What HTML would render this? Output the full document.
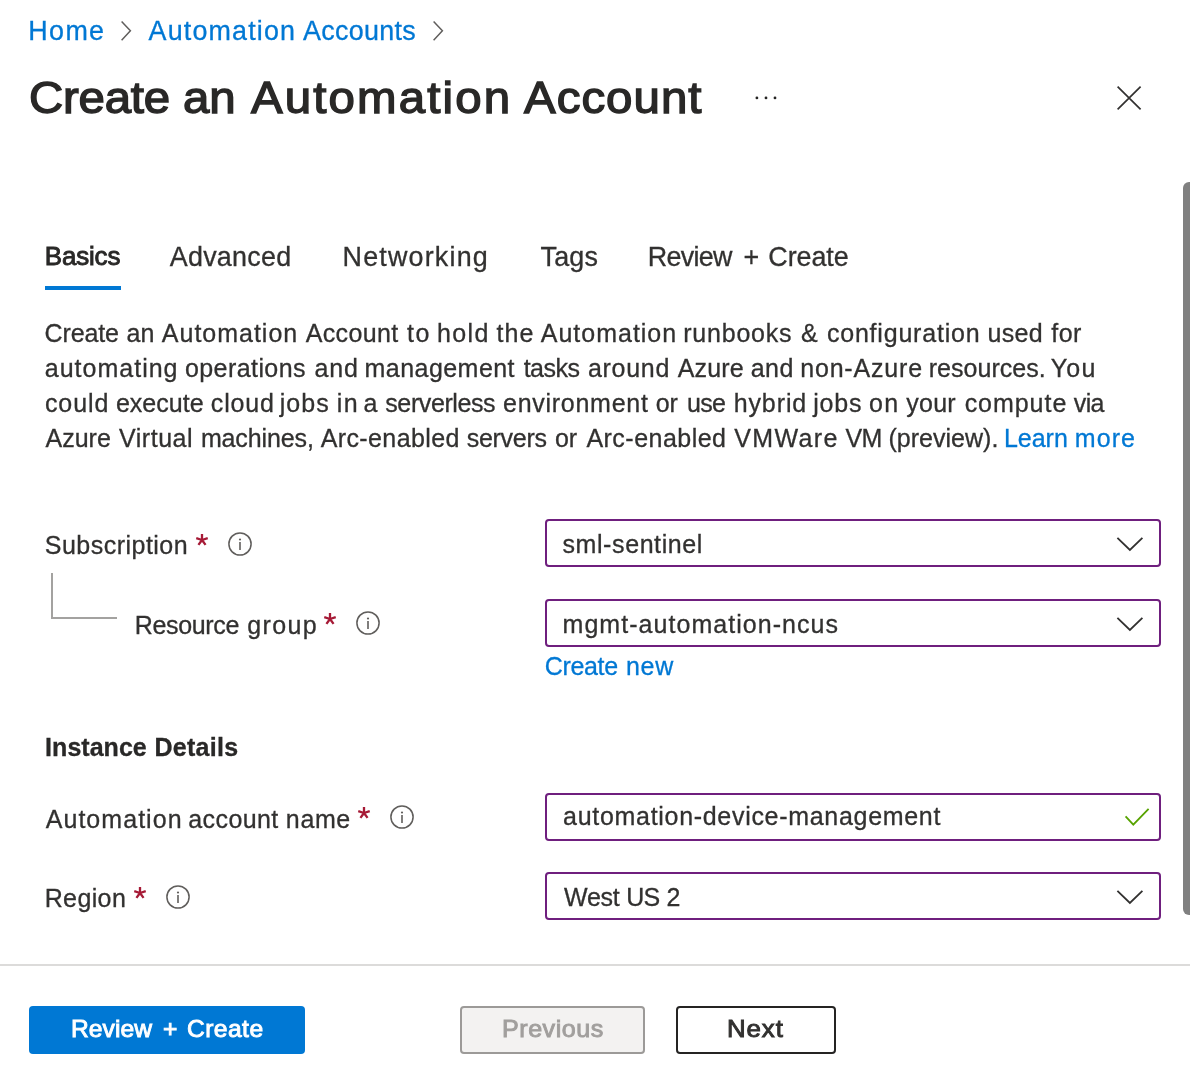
<!DOCTYPE html>
<html>
<head>
<meta charset="utf-8">
<title>Create an Automation Account</title>
<style>
html,body{margin:0;padding:0;background:#fff;}
body{width:1190px;height:1081px;position:relative;overflow:hidden;font-family:"Liberation Sans",sans-serif;color:#323130;}
.t{position:absolute;white-space:nowrap;line-height:1;margin:0;padding:0;}
.inp{position:absolute;left:545px;width:616px;height:48px;box-sizing:border-box;border:2px solid #6f1f7e;border-radius:4px;background:#fff;}
.btn{position:absolute;top:1006px;height:48px;box-sizing:border-box;border-radius:4px;}
svg{position:absolute;overflow:visible;}
.g{position:static;}
#root{position:absolute;left:0;top:0;width:1190px;height:1081px;will-change:transform;}
</style>
</head>
<body><div id="root">
<!-- breadcrumb chevrons -->
<svg style="left:120.6px;top:21.25px;" width="12" height="20" viewBox="0 0 12 20"><path d="M0.6 0.4 L9.4 9.85 L0.6 19.3" fill="none" stroke="#605e5c" stroke-width="1.5"/></svg>
<svg style="left:432.7px;top:21.25px;" width="12" height="20" viewBox="0 0 12 20"><path d="M0.6 0.4 L9.4 9.85 L0.6 19.3" fill="none" stroke="#605e5c" stroke-width="1.5"/></svg>
<!-- title icons -->
<svg style="left:754px;top:94px;" width="26" height="8" viewBox="0 0 26 8"><circle cx="2.9" cy="3.9" r="1.4" fill="#252423"/><circle cx="12" cy="3.9" r="1.4" fill="#252423"/><circle cx="21" cy="3.9" r="1.4" fill="#252423"/></svg>
<svg style="left:1117px;top:86px;" width="24" height="24" viewBox="0 0 24 24"><path d="M0.6 0.6 L23.6 23.3 M23.6 0.6 L0.6 23.3" fill="none" stroke="#323130" stroke-width="1.7"/></svg>
<!-- scrollbar -->
<div style="position:absolute;left:1183px;top:181.5px;width:16px;height:733px;background:#808080;border-radius:6px;"></div>
<!-- tab underline -->
<div style="position:absolute;left:45px;top:286px;width:76px;height:4px;background:#0078d4;"></div>
<!-- tree line -->
<div style="position:absolute;left:51px;top:573px;width:66px;height:46px;box-sizing:border-box;border-left:2px solid #a3a2a0;border-bottom:2px solid #a3a2a0;"></div>
<!-- inputs -->
<div class="inp" style="top:519px;"></div><div class="inp" style="top:599px;"></div><div class="inp" style="top:793px;"></div><div class="inp" style="top:872px;"></div>
<svg style="left:1116px;top:536.6px;" width="28" height="16" viewBox="0 0 28 16"><path d="M1.4 0.8 L13.9 13 L26.4 0.8" fill="none" stroke="#323130" stroke-width="1.8"/></svg><svg style="left:1116px;top:616.6px;" width="28" height="16" viewBox="0 0 28 16"><path d="M1.4 0.8 L13.9 13 L26.4 0.8" fill="none" stroke="#323130" stroke-width="1.8"/></svg><svg style="left:1116px;top:889.8px;" width="28" height="16" viewBox="0 0 28 16"><path d="M1.4 0.8 L13.9 13 L26.4 0.8" fill="none" stroke="#323130" stroke-width="1.8"/></svg>
<svg style="left:1120px;top:804px;" width="34" height="26" viewBox="0 0 34 26"><path d="M5.6 12.4 L13.3 20.6 L28.6 4.9" fill="none" stroke="#57a300" stroke-width="1.8"/></svg>
<!-- required + info -->
<svg style="left:201.95px;top:540.0px;" width="1" height="1" viewBox="0 0 1 1"><path d="M0 0 L0.00 -6.05 M0 0 L5.75 -1.87 M0 0 L3.56 4.89 M0 0 L-3.56 4.89 M0 0 L-5.75 -1.87 " fill="none" stroke="#a61a36" stroke-width="2.3"/></svg><svg style="left:227.1px;top:530.9px;" width="26" height="26" viewBox="0 0 26 26"><circle cx="13" cy="13" r="11.1" fill="none" stroke="#605e5c" stroke-width="1.5"/><circle cx="13" cy="8.5" r="1.1" fill="#605e5c"/><path d="M13 11.0 V18.9" stroke="#605e5c" stroke-width="1.6" fill="none"/></svg>
<svg style="left:330.0px;top:619.3px;" width="1" height="1" viewBox="0 0 1 1"><path d="M0 0 L0.00 -6.05 M0 0 L5.75 -1.87 M0 0 L3.56 4.89 M0 0 L-3.56 4.89 M0 0 L-5.75 -1.87 " fill="none" stroke="#a61a36" stroke-width="2.3"/></svg><svg style="left:355.1px;top:610.0px;" width="26" height="26" viewBox="0 0 26 26"><circle cx="13" cy="13" r="11.1" fill="none" stroke="#605e5c" stroke-width="1.5"/><circle cx="13" cy="8.5" r="1.1" fill="#605e5c"/><path d="M13 11.0 V18.9" stroke="#605e5c" stroke-width="1.6" fill="none"/></svg>
<svg style="left:364.05px;top:813.3px;" width="1" height="1" viewBox="0 0 1 1"><path d="M0 0 L0.00 -6.05 M0 0 L5.75 -1.87 M0 0 L3.56 4.89 M0 0 L-3.56 4.89 M0 0 L-5.75 -1.87 " fill="none" stroke="#a61a36" stroke-width="2.3"/></svg><svg style="left:389.05px;top:803.9px;" width="26" height="26" viewBox="0 0 26 26"><circle cx="13" cy="13" r="11.1" fill="none" stroke="#605e5c" stroke-width="1.5"/><circle cx="13" cy="8.5" r="1.1" fill="#605e5c"/><path d="M13 11.0 V18.9" stroke="#605e5c" stroke-width="1.6" fill="none"/></svg>
<svg style="left:140.0px;top:893.3px;" width="1" height="1" viewBox="0 0 1 1"><path d="M0 0 L0.00 -6.05 M0 0 L5.75 -1.87 M0 0 L3.56 4.89 M0 0 L-3.56 4.89 M0 0 L-5.75 -1.87 " fill="none" stroke="#a61a36" stroke-width="2.3"/></svg><svg style="left:165.1px;top:883.9px;" width="26" height="26" viewBox="0 0 26 26"><circle cx="13" cy="13" r="11.1" fill="none" stroke="#605e5c" stroke-width="1.5"/><circle cx="13" cy="8.5" r="1.1" fill="#605e5c"/><path d="M13 11.0 V18.9" stroke="#605e5c" stroke-width="1.6" fill="none"/></svg>
<!-- footer -->
<div style="position:absolute;left:0;top:964px;width:1190px;height:2px;background:#dcdbda;"></div>
<div class="btn" style="left:29px;width:276px;background:#0078d4;"></div>
<div class="btn" style="left:460px;width:185px;background:#f3f2f1;border:2px solid #9c9a98;"></div>
<div class="btn" style="left:676px;width:160px;background:#fff;border:2px solid #252423;"></div>
<!-- text -->
<div class="g">
<span class="t" style="left:28.35px;top:17.66px;font-size:26.9px;-webkit-text-stroke:0.30px #0078d4;letter-spacing:1.329px;color:#0078d4;">Home</span>
</div>
<div class="g">
<span class="t" style="left:148.58px;top:17.66px;font-size:26.9px;-webkit-text-stroke:0.30px #0078d4;letter-spacing:1.148px;color:#0078d4;">Automation</span>
<span class="t" style="left:302.93px;top:17.66px;font-size:26.9px;-webkit-text-stroke:0.30px #0078d4;letter-spacing:0.304px;color:#0078d4;">Accounts</span>
</div>
<div class="g">
<span class="t" style="left:29.07px;top:75.10px;font-size:45.2px;-webkit-text-stroke:1.40px #292827;letter-spacing:-0.260px;color:#292827;transform:scaleX(1.05);transform-origin:0 0;">Create</span>
<span class="t" style="left:182.64px;top:75.10px;font-size:45.2px;-webkit-text-stroke:1.40px #292827;letter-spacing:-0.139px;color:#292827;transform:scaleX(1.05);transform-origin:0 0;">an</span>
<span class="t" style="left:250.53px;top:75.10px;font-size:45.2px;-webkit-text-stroke:1.40px #292827;letter-spacing:2.013px;color:#292827;transform:scaleX(1.05);transform-origin:0 0;">Automation</span>
<span class="t" style="left:523.52px;top:75.10px;font-size:45.2px;-webkit-text-stroke:1.40px #292827;letter-spacing:0.959px;color:#292827;transform:scaleX(1.05);transform-origin:0 0;">Account</span>
</div>
<div class="g">
<span class="t" style="left:44.75px;top:244.31px;font-size:25.9px;-webkit-text-stroke:0.90px #292827;letter-spacing:-0.125px;color:#292827;">Basics</span>
</div>
<div class="g">
<span class="t" style="left:169.72px;top:243.61px;font-size:26.9px;-webkit-text-stroke:0.30px #323130;letter-spacing:0.262px;color:#323130;">Advanced</span>
</div>
<div class="g">
<span class="t" style="left:342.58px;top:243.61px;font-size:26.9px;-webkit-text-stroke:0.30px #323130;letter-spacing:1.184px;color:#323130;">Networking</span>
</div>
<div class="g">
<span class="t" style="left:540.47px;top:243.61px;font-size:26.9px;-webkit-text-stroke:0.30px #323130;letter-spacing:0.242px;color:#323130;">Tags</span>
</div>
<div class="g">
<span class="t" style="left:647.76px;top:243.61px;font-size:26.9px;-webkit-text-stroke:0.30px #323130;letter-spacing:-0.700px;color:#323130;">Review</span>
<span class="t" style="left:743.58px;top:243.61px;font-size:26.9px;-webkit-text-stroke:0.30px #323130;color:#323130;">+</span>
<span class="t" style="left:768.36px;top:243.61px;font-size:26.9px;-webkit-text-stroke:0.30px #323130;letter-spacing:-0.087px;color:#323130;">Create</span>
</div>
<div class="g">
<span class="t" style="left:44.61px;top:320.91px;font-size:25.0px;-webkit-text-stroke:0.30px #323130;letter-spacing:-0.136px;color:#323130;">Create</span>
<span class="t" style="left:126.40px;top:320.91px;font-size:25.0px;-webkit-text-stroke:0.30px #323130;letter-spacing:0.235px;color:#323130;">an</span>
<span class="t" style="left:161.86px;top:320.91px;font-size:25.0px;-webkit-text-stroke:0.30px #323130;letter-spacing:0.987px;color:#323130;">Automation</span>
<span class="t" style="left:305.70px;top:320.91px;font-size:25.0px;-webkit-text-stroke:0.30px #323130;letter-spacing:0.362px;color:#323130;">Account</span>
<span class="t" style="left:407.12px;top:320.91px;font-size:25.0px;-webkit-text-stroke:0.30px #323130;letter-spacing:1.400px;color:#323130;">to</span>
<span class="t" style="left:436.94px;top:320.91px;font-size:25.0px;-webkit-text-stroke:0.30px #323130;letter-spacing:1.400px;color:#323130;">hold</span>
<span class="t" style="left:496.54px;top:320.91px;font-size:25.0px;-webkit-text-stroke:0.30px #323130;letter-spacing:1.060px;color:#323130;">the</span>
<span class="t" style="left:540.83px;top:320.91px;font-size:25.0px;-webkit-text-stroke:0.30px #323130;letter-spacing:0.982px;color:#323130;">Automation</span>
<span class="t" style="left:683.19px;top:320.91px;font-size:25.0px;-webkit-text-stroke:0.30px #323130;letter-spacing:0.791px;color:#323130;">runbooks</span>
<span class="t" style="left:801.04px;top:320.91px;font-size:25.0px;-webkit-text-stroke:0.30px #323130;color:#323130;">&amp;</span>
<span class="t" style="left:826.91px;top:320.91px;font-size:25.0px;-webkit-text-stroke:0.30px #323130;letter-spacing:0.796px;color:#323130;">configuration</span>
<span class="t" style="left:987.43px;top:320.91px;font-size:25.0px;-webkit-text-stroke:0.30px #323130;letter-spacing:0.303px;color:#323130;">used</span>
<span class="t" style="left:1051.17px;top:320.91px;font-size:25.0px;-webkit-text-stroke:0.30px #323130;letter-spacing:0.558px;color:#323130;">for</span>
</div>
<div class="g">
<span class="t" style="left:44.82px;top:355.91px;font-size:25.0px;-webkit-text-stroke:0.30px #323130;letter-spacing:1.002px;color:#323130;">automating</span>
<span class="t" style="left:184.96px;top:355.91px;font-size:25.0px;-webkit-text-stroke:0.30px #323130;letter-spacing:0.425px;color:#323130;">operations</span>
<span class="t" style="left:314.38px;top:355.91px;font-size:25.0px;-webkit-text-stroke:0.30px #323130;letter-spacing:0.848px;color:#323130;">and</span>
<span class="t" style="left:364.57px;top:355.91px;font-size:25.0px;-webkit-text-stroke:0.30px #323130;letter-spacing:0.450px;color:#323130;">management</span>
<span class="t" style="left:523.65px;top:355.91px;font-size:25.0px;-webkit-text-stroke:0.30px #323130;letter-spacing:-0.494px;color:#323130;">tasks</span>
<span class="t" style="left:587.95px;top:355.91px;font-size:25.0px;-webkit-text-stroke:0.30px #323130;letter-spacing:0.713px;color:#323130;">around</span>
<span class="t" style="left:677.81px;top:355.91px;font-size:25.0px;-webkit-text-stroke:0.30px #323130;letter-spacing:0.133px;color:#323130;">Azure</span>
<span class="t" style="left:750.73px;top:355.91px;font-size:25.0px;-webkit-text-stroke:0.30px #323130;letter-spacing:0.466px;color:#323130;">and</span>
<span class="t" style="left:800.24px;top:355.91px;font-size:25.0px;-webkit-text-stroke:0.30px #323130;letter-spacing:0.809px;color:#323130;">non-Azure</span>
<span class="t" style="left:928.73px;top:355.91px;font-size:25.0px;-webkit-text-stroke:0.30px #323130;letter-spacing:0.041px;color:#323130;">resources.</span>
<span class="t" style="left:1050.65px;top:355.91px;font-size:25.0px;-webkit-text-stroke:0.30px #323130;letter-spacing:1.251px;color:#323130;">You</span>
</div>
<div class="g">
<span class="t" style="left:44.90px;top:390.91px;font-size:25.0px;-webkit-text-stroke:0.30px #323130;letter-spacing:0.966px;color:#323130;">could</span>
<span class="t" style="left:115.88px;top:390.91px;font-size:25.0px;-webkit-text-stroke:0.30px #323130;letter-spacing:0.029px;color:#323130;">execute</span>
<span class="t" style="left:210.82px;top:390.91px;font-size:25.0px;-webkit-text-stroke:0.30px #323130;letter-spacing:0.861px;color:#323130;">cloud</span>
<span class="t" style="left:279.75px;top:390.91px;font-size:25.0px;-webkit-text-stroke:0.30px #323130;letter-spacing:1.036px;color:#323130;">jobs</span>
<span class="t" style="left:336.69px;top:390.91px;font-size:25.0px;-webkit-text-stroke:0.30px #323130;letter-spacing:1.400px;color:#323130;">in</span>
<span class="t" style="left:363.42px;top:390.91px;font-size:25.0px;-webkit-text-stroke:0.30px #323130;color:#323130;">a</span>
<span class="t" style="left:385.28px;top:390.91px;font-size:25.0px;-webkit-text-stroke:0.30px #323130;letter-spacing:-0.396px;color:#323130;">serverless</span>
<span class="t" style="left:503.05px;top:390.91px;font-size:25.0px;-webkit-text-stroke:0.30px #323130;letter-spacing:0.722px;color:#323130;">environment</span>
<span class="t" style="left:655.82px;top:390.91px;font-size:25.0px;-webkit-text-stroke:0.30px #323130;letter-spacing:-0.331px;color:#323130;">or</span>
<span class="t" style="left:686.89px;top:390.91px;font-size:25.0px;-webkit-text-stroke:0.30px #323130;letter-spacing:-0.590px;color:#323130;">use</span>
<span class="t" style="left:733.66px;top:390.91px;font-size:25.0px;-webkit-text-stroke:0.30px #323130;letter-spacing:0.902px;color:#323130;">hybrid</span>
<span class="t" style="left:813.25px;top:390.91px;font-size:25.0px;-webkit-text-stroke:0.30px #323130;letter-spacing:0.789px;color:#323130;">jobs</span>
<span class="t" style="left:868.93px;top:390.91px;font-size:25.0px;-webkit-text-stroke:0.30px #323130;letter-spacing:1.357px;color:#323130;">on</span>
<span class="t" style="left:906.32px;top:390.91px;font-size:25.0px;-webkit-text-stroke:0.30px #323130;letter-spacing:0.226px;color:#323130;">your</span>
<span class="t" style="left:964.63px;top:390.91px;font-size:25.0px;-webkit-text-stroke:0.30px #323130;letter-spacing:0.963px;color:#323130;">compute</span>
<span class="t" style="left:1073.83px;top:390.91px;font-size:25.0px;-webkit-text-stroke:0.30px #323130;letter-spacing:-0.700px;color:#323130;">via</span>
</div>
<div class="g">
<span class="t" style="left:45.48px;top:425.91px;font-size:25.0px;-webkit-text-stroke:0.30px #323130;letter-spacing:0.025px;color:#323130;">Azure</span>
<span class="t" style="left:119.04px;top:425.91px;font-size:25.0px;-webkit-text-stroke:0.30px #323130;letter-spacing:0.523px;color:#323130;">Virtual</span>
<span class="t" style="left:200.89px;top:425.91px;font-size:25.0px;-webkit-text-stroke:0.30px #323130;letter-spacing:-0.115px;color:#323130;">machines,</span>
<span class="t" style="left:320.73px;top:425.91px;font-size:25.0px;-webkit-text-stroke:0.30px #323130;letter-spacing:0.384px;color:#323130;">Arc-enabled</span>
<span class="t" style="left:466.82px;top:425.91px;font-size:25.0px;-webkit-text-stroke:0.30px #323130;letter-spacing:-0.306px;color:#323130;">servers</span>
<span class="t" style="left:555.10px;top:425.91px;font-size:25.0px;-webkit-text-stroke:0.30px #323130;letter-spacing:-0.190px;color:#323130;">or</span>
<span class="t" style="left:586.40px;top:425.91px;font-size:25.0px;-webkit-text-stroke:0.30px #323130;letter-spacing:0.483px;color:#323130;">Arc-enabled</span>
<span class="t" style="left:734.14px;top:425.91px;font-size:25.0px;-webkit-text-stroke:0.30px #323130;letter-spacing:1.400px;color:#323130;">VMWare</span>
<span class="t" style="left:845.46px;top:425.91px;font-size:25.0px;-webkit-text-stroke:0.30px #323130;letter-spacing:-0.700px;color:#323130;">VM</span>
<span class="t" style="left:888.39px;top:425.91px;font-size:25.0px;-webkit-text-stroke:0.30px #323130;letter-spacing:0.034px;color:#323130;">(preview).</span>
</div>
<div class="g">
<span class="t" style="left:1003.98px;top:425.91px;font-size:25.0px;-webkit-text-stroke:0.30px #0078d4;letter-spacing:-0.029px;color:#0078d4;">Learn</span>
<span class="t" style="left:1074.76px;top:425.91px;font-size:25.0px;-webkit-text-stroke:0.30px #0078d4;letter-spacing:1.092px;color:#0078d4;">more</span>
</div>
<div class="g">
<span class="t" style="left:44.72px;top:532.76px;font-size:25.0px;-webkit-text-stroke:0.30px #323130;letter-spacing:0.489px;color:#323130;">Subscription</span>
</div>
<div class="g">
<span class="t" style="left:134.69px;top:612.81px;font-size:25.0px;-webkit-text-stroke:0.30px #323130;letter-spacing:-0.336px;color:#323130;">Resource</span>
<span class="t" style="left:247.21px;top:612.81px;font-size:25.0px;-webkit-text-stroke:0.30px #323130;letter-spacing:1.353px;color:#323130;">group</span>
</div>
<div class="g">
<span class="t" style="left:45.11px;top:734.76px;font-size:25.0px;-webkit-text-stroke:0.30px #292827;font-weight:bold;letter-spacing:0.027px;color:#292827;">Instance</span>
<span class="t" style="left:154.40px;top:734.76px;font-size:25.0px;-webkit-text-stroke:0.30px #292827;font-weight:bold;letter-spacing:0.278px;color:#292827;">Details</span>
</div>
<div class="g">
<span class="t" style="left:45.73px;top:806.86px;font-size:25.0px;-webkit-text-stroke:0.30px #323130;letter-spacing:1.043px;color:#323130;">Automation</span>
<span class="t" style="left:188.24px;top:806.86px;font-size:25.0px;-webkit-text-stroke:0.30px #323130;letter-spacing:0.418px;color:#323130;">account</span>
<span class="t" style="left:285.87px;top:806.86px;font-size:25.0px;-webkit-text-stroke:0.30px #323130;letter-spacing:0.625px;color:#323130;">name</span>
</div>
<div class="g">
<span class="t" style="left:44.69px;top:885.86px;font-size:25.0px;-webkit-text-stroke:0.30px #323130;letter-spacing:0.375px;color:#323130;">Region</span>
</div>
<div class="g">
<span class="t" style="left:562.47px;top:531.96px;font-size:25.0px;-webkit-text-stroke:0.30px #323130;letter-spacing:0.592px;color:#323130;">sml-sentinel</span>
</div>
<div class="g">
<span class="t" style="left:562.57px;top:611.76px;font-size:25.0px;-webkit-text-stroke:0.30px #323130;letter-spacing:1.041px;color:#323130;">mgmt-automation-ncus</span>
</div>
<div class="g">
<span class="t" style="left:544.71px;top:653.66px;font-size:25.0px;-webkit-text-stroke:0.30px #0078d4;letter-spacing:-0.319px;color:#0078d4;">Create</span>
<span class="t" style="left:625.93px;top:653.66px;font-size:25.0px;-webkit-text-stroke:0.30px #0078d4;letter-spacing:0.723px;color:#0078d4;">new</span>
</div>
<div class="g">
<span class="t" style="left:563.08px;top:803.66px;font-size:25.0px;-webkit-text-stroke:0.30px #323130;letter-spacing:0.696px;color:#323130;">automation-device-management</span>
</div>
<div class="g">
<span class="t" style="left:564.09px;top:884.56px;font-size:25.0px;-webkit-text-stroke:0.30px #323130;letter-spacing:-0.262px;color:#323130;">West</span>
<span class="t" style="left:626.21px;top:884.56px;font-size:25.0px;-webkit-text-stroke:0.30px #323130;letter-spacing:-0.700px;color:#323130;">US</span>
<span class="t" style="left:666.59px;top:884.56px;font-size:25.0px;-webkit-text-stroke:0.30px #323130;color:#323130;">2</span>
</div>
<div class="g">
<span class="t" style="left:71.18px;top:1017.35px;font-size:23.9px;-webkit-text-stroke:0.90px #ffffff;letter-spacing:0.047px;color:#ffffff;transform:scaleX(1.03);transform-origin:0 0;">Review</span>
<span class="t" style="left:162.85px;top:1017.35px;font-size:23.9px;-webkit-text-stroke:0.90px #ffffff;color:#ffffff;transform:scaleX(1.03);transform-origin:0 0;">+</span>
<span class="t" style="left:186.80px;top:1017.35px;font-size:23.9px;-webkit-text-stroke:0.90px #ffffff;letter-spacing:0.431px;color:#ffffff;transform:scaleX(1.03);transform-origin:0 0;">Create</span>
</div>
<div class="g">
<span class="t" style="left:501.71px;top:1017.35px;font-size:23.9px;-webkit-text-stroke:0.90px #a19f9d;letter-spacing:0.500px;color:#a19f9d;transform:scaleX(1.05);transform-origin:0 0;">Previous</span>
</div>
<div class="g">
<span class="t" style="left:726.79px;top:1017.35px;font-size:23.9px;-webkit-text-stroke:0.90px #323130;letter-spacing:0.848px;color:#323130;transform:scaleX(1.08);transform-origin:0 0;">Next</span>
</div>
</div></body>
</html>
